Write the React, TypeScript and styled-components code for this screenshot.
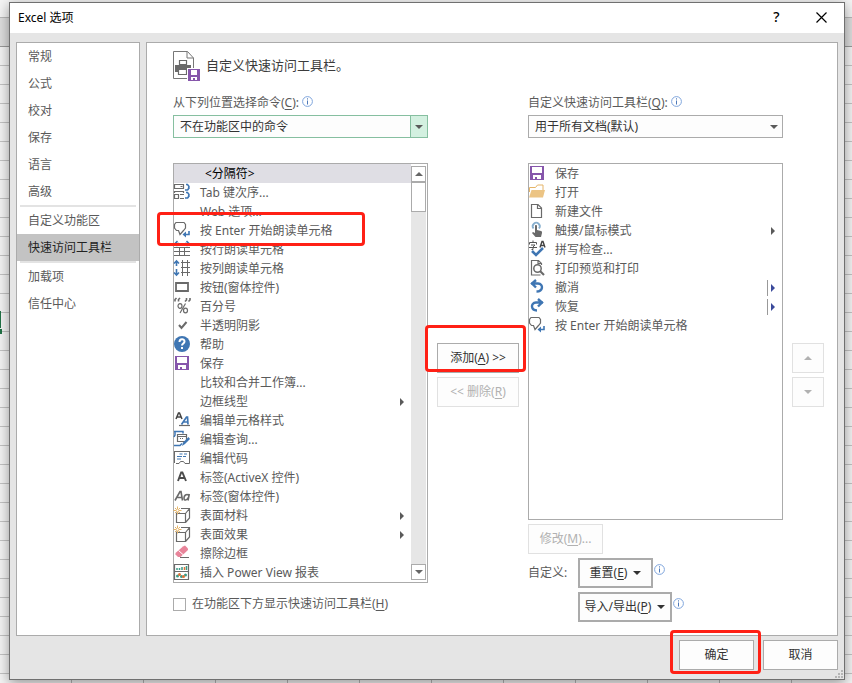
import React, { useState } from "react";
import styled, { createGlobalStyle, css } from "styled-components";

const GlobalStyle = createGlobalStyle`
  *, *::before, *::after { box-sizing: border-box; }
  body { margin: 0; }
  body, button, select, input {
    font-family: "Noto Sans", "Noto Sans CJK SC", sans-serif;
    font-size: 12px;
    line-height: 18px;
  }
  u { text-underline-offset: 2px; }
`;

const Sheet = styled.div`
  position: relative;
  display: flex;
  min-height: 100vh;
  padding: 2px 7px 3px 9px;
  background-color: #f4f4f4;
  background-image:
    linear-gradient(#f4f4f4 17px, #b8b8b8 17px, #b8b8b8 18px, #dedede 18px, #dedede 46px, #9a9a9a 46px, #9a9a9a 47px, transparent 47px),
    repeating-linear-gradient(transparent 0, transparent 8px, #c3c3c3 8px, #c3c3c3 9px, transparent 9px, transparent 19px),
    repeating-linear-gradient(90deg, transparent 0, transparent 71px, #b5b5b5 71px, #b5b5b5 72px);
`;

const ActiveCell = styled.div`
  position: absolute;
  left: 0;
  top: 311px;
  width: 1px;
  height: 17px;
  background: #217346;
  &::after {
    content: "";
    position: absolute;
    left: 0;
    top: 18px;
    width: 2px;
    height: 5px;
    background: #217346;
  }
`;

const Dialog = styled.div`
  position: relative;
  flex: 1;
  min-width: 0;
  display: flex;
  flex-direction: column;
  border: 1px solid #707070;
  background: #e5e5e5;
  box-shadow: 0 3px 12px rgba(0, 0, 0, 0.4);
`;

const TitleBar = styled.header`
  display: flex;
  height: 30px;
  padding-left: 8px;
  background: #fff;
  color: #000;
`;

const WindowTitle = styled.h1`
  flex: 1;
  margin: 0;
  font-size: 12px;
  font-weight: 400;
  line-height: 29px;
`;

const WindowButton = styled.button`
  display: grid;
  place-items: center;
  width: 45px;
  height: 28px;
  padding: 0;
  border: 0;
  background: none;
  font-size: 14px;
  font-weight: 500;
  color: #000;
`;

const Body = styled.div`
  flex: 1;
  display: flex;
  gap: 6px;
  padding: 9px 6px 0;
`;

const Sidebar = styled.nav`
  width: 124px;
  border: 1px solid #ababab;
  background: #fff;
`;

const NavItem = styled.a<{ $active?: boolean }>`
  display: block;
  padding-left: 11px;
  line-height: 27px;
  text-decoration: none;
  color: ${(p) => (p.$active ? "#222" : "#5a5a5a")};
  background: ${(p) => (p.$active ? "#c3c3c3" : "none")};
`;

const NavRule = styled.hr`
  height: 2px;
  margin: 0 3px;
  border: 0;
  background: #e3e3e3;
`;

const Main = styled.main`
  flex: 1;
  min-width: 0;
  padding: 8px 13px 8px 26px;
  border: 1px solid #ababab;
  background: #fff;
  color: #5a5a5a;
`;

const Heading = styled.h2`
  display: flex;
  align-items: center;
  gap: 5px;
  height: 31px;
  margin: 0 0 11px;
  font-size: 13px;
  font-weight: 400;
  color: #3c3c3c;
  span { padding-bottom: 3px; }
`;

const Columns = styled.div`
  display: grid;
  grid-template-columns: minmax(0, 1fr) 82px minmax(0, 1fr) 32px;
  gap: 9px;
`;

const Column = styled.section`
  display: flex;
  flex-direction: column;
`;

const ButtonColumn = styled.div`
  display: flex;
  flex-direction: column;
  gap: 4px;
  padding-top: 250px;
`;

const FieldLabel = styled.div`
  display: flex;
  align-items: center;
  gap: 3px;
  height: 20px;
  margin-bottom: 2px;
  svg { margin-bottom: 3px; }
`;

const SelectBox = styled.div<{ $hot?: boolean }>`
  position: relative;
  margin-bottom: 25px;
  select {
    display: block;
    width: 100%;
    height: 23px;
    padding: 0 24px 0 6px;
    appearance: none;
    border: 1px solid ${(p) => (p.$hot ? "#86bfa0" : "#ababab")};
    border-radius: 0;
    background: #fdfdfd;
    color: #333;
  }
`;

const SelectArrow = styled.span<{ $hot?: boolean }>`
  position: absolute;
  top: 0;
  right: 0;
  display: grid;
  place-items: center;
  width: 18px;
  height: 23px;
  pointer-events: none;
  ${(p) =>
    p.$hot &&
    css`
      border: 1px solid #86bfa0;
      background: #d3f0e0;
    `}
`;

const ListFrame = styled.div<{ $tall?: boolean }>`
  display: flex;
  min-height: ${(p) => (p.$tall ? "420px" : "357px")};
  border: 1px solid #ababab;
`;

const List = styled.ul`
  flex: 1;
  min-width: 0;
  margin: 0;
  padding: 0;
  list-style: none;
`;

const ListRow = styled.li<{ $selected?: boolean }>`
  position: relative;
  display: flex;
  align-items: center;
  gap: 10px;
  height: 19px;
  padding-right: 5px;
  white-space: nowrap;
  cursor: default;
  ${(p) =>
    p.$selected &&
    css`
      padding-left: 5px;
      background: #dfdee4;
      color: #000;
    `}
`;

const IconSlot = styled.span`
  display: block;
  width: 16px;
  height: 16px;
  margin-bottom: 1px;
  svg { display: block; overflow: visible; }
`;

const RowText = styled.span`
  flex: 1;
`;

const SplitMark = styled.span`
  display: flex;
  align-items: center;
  height: 16px;
  padding-left: 1px;
  border-left: 1px solid #999;
  color: #3b4a9b;
`;

const ScrollBar = styled.div`
  display: flex;
  flex-direction: column;
  width: 16px;
  padding: 2px 1px 2px 0;
`;

const ScrollButton = styled.button`
  display: grid;
  place-items: center;
  height: 16px;
  padding: 0;
  border: 1px solid #ababab;
  background: #fff;
  color: #666;
`;

const ScrollTrack = styled.div`
  flex: 1;
  background: #e6e6e6;
`;

const ScrollThumb = styled.div`
  height: 30px;
  border: 1px solid #ababab;
  background: #fff;
`;

const Callout = styled.span<{ $kind: "row" | "add" | "ok" }>`
  position: absolute;
  z-index: 2;
  border: 3px solid #ff2015;
  border-radius: 4px;
  pointer-events: none;
  ${(p) => p.$kind === "row" && css`left: -17px; top: -9px; width: 208px; height: 34px;`}
  ${(p) => p.$kind === "add" && css`inset: -19px -8px 0 -13px;`}
  ${(p) => p.$kind === "ok" && css`inset: -11px -8px -5px -10px;`}
`;

const PushButton = styled.button<{ $strong?: boolean; $wide?: boolean }>`
  position: relative;
  display: flex;
  align-items: center;
  justify-content: center;
  gap: 6px;
  min-width: ${(p) => (p.$wide ? "94px" : "75px")};
  height: 30px;
  padding: 0;
  border: ${(p) => (p.$strong ? "2px" : "1px")} solid #ababab;
  background: #fdfdfd;
  color: #333;
  white-space: nowrap;
  &:disabled {
    border-color: #e1e1e1;
    color: #b1b1b1;
  }
`;

const MoveButton = styled(PushButton)`
  min-width: 32px;
`;

const Actions = styled.div`
  display: grid;
  grid-template-columns: 50px auto 1fr;
  gap: 4px 0;
  margin-top: 4px;
  justify-items: start;
`;

const ModifyCell = styled.div`
  grid-column: 1 / -1;
`;

const ActionLabel = styled.span`
  line-height: 30px;
`;

const ActionGroup = styled.div`
  grid-column: 2 / -1;
  display: flex;
  gap: 1px;
  svg { margin-top: 6px; }
  button svg { margin-top: 0; }
`;

const CheckRow = styled.label`
  display: flex;
  align-items: center;
  gap: 6px;
  margin-top: 12px;
  input {
    width: 13px;
    height: 13px;
    margin: 0;
    appearance: none;
    border: 1px solid #ababab;
    background: #fff;
  }
  input:checked { background: #217346; }
`;

const Footer = styled.footer`
  display: flex;
  justify-content: flex-end;
  gap: 9px;
  padding: 4px 6px 9px;
`;

const Grip = styled.svg`
  position: absolute;
  right: 1px;
  bottom: 1px;
`;

type Direction = "up" | "down" | "right";

const trianglePaths: Record<Direction, string> = {
  up: "M0 6 4 2 8 6z",
  down: "M0 2h8L4 6z",
  right: "M2 0 6 4 2 8z",
};

const Triangle = ({ dir }: { dir: Direction }) => (
  <svg width="8" height="8" viewBox="0 0 8 8" fill="currentColor" aria-hidden="true">
    <path d={trianglePaths[dir]} />
  </svg>
);

const InfoIcon = () => (
  <svg width="11" height="11" viewBox="0 0 11 11" fill="none" aria-hidden="true">
    <circle cx="5.5" cy="5.5" r="4.9" stroke="#7fa5dc" />
    <path d="M5.5 4.5v4M5.5 2.3v1.2" stroke="#4d78b8" />
  </svg>
);

const GRAY = "#6a6a6a";
const BLUE = "#3f76b3";
const PURPLE = "#8656ab";

const SaveShape = () => (
  <path fill={PURPLE} fillRule="evenodd" d="M1 1h14v14H1zM3 2v6h10V2zM4 10v4h2v-2h2v2h4v-4z" />
);

const ReadShape = () => (
  <>
    <path d="M2 .5h8l1.500 2v3.500L9.500 8.500 6 12.500 4.500 8.500H2.500L.5 6V2.500z" stroke={GRAY} strokeWidth="1.200" fill="none" />
    <path d="M15 9v3.500h-5" stroke={BLUE} strokeWidth="1.600" fill="none" />
    <path d="M12 9.500v6L8.500 12.500z" fill={BLUE} />
  </>
);

const CubeShape = () => (
  <>
    <path d="M2.500 6.500h9v9h-9zM7 1.500h8.500V11L11.500 15.500M11.500 6.500l4-5M2.500 6.500 4 5" stroke={GRAY} strokeWidth="1.200" fill="none" />
    <path d="M3.500-.5v8M-.5 3.500h8M1 1l5 5M6 1l-5 5" stroke="#e5b468" />
    <circle cx="3.500" cy="3.500" r="1.400" fill="#fff" stroke="#e5b468" strokeWidth=".8" />
  </>
);

const glyphs: Record<string, React.ReactNode> = {
  tab: (
    <>
      <path d="M.5.500h9v4h-9zM6.500 2.500h2M0 7.500h10M.5 7v2M9.500 7v2M.5 10.500h4v4h-4zM6 10.500h4M6 14.500h4M2 10.500h3" stroke={GRAY} strokeWidth="1.200" fill="none" />
      <path d="M12 .5h1.500l1.500 2-1 3.500M15.500 3.500 13.500 6H11M12 8.500h1.500l1.500 2-1 3.500M15.500 11.500l-2 2.500H11" stroke={BLUE} strokeWidth="1.500" fill="none" />
    </>
  ),
  read: <ReadShape />,
  rows: (
    <>
      <path d="M0 6.500h16M0 10.500h16M0 14.500h16M5.500 6v9M10.500 6v9" stroke={GRAY} fill="none" />
      <path d="M1 2.500h4M11 2.500h4M3.500 0 1 2.500 3.500 5M12.500 0 15 2.500 12.500 5" stroke={BLUE} strokeWidth="1.500" fill="none" />
    </>
  ),
  cols: (
    <>
      <path d="M8.500 0v16M13.500 0v16M7 2.500h9M7 7.500h9M7 12.500h9" stroke={GRAY} fill="none" />
      <path d="M2.500 1v5M0 3.500 2.500 1 5 3.500M2.500 9v6M0 12.500 2.500 15 5 12.500" stroke={BLUE} strokeWidth="1.600" fill="none" />
    </>
  ),
  button: <path d="M2 4h12v8H2z" stroke={GRAY} strokeWidth="1.800" fill="none" />,
  percent: (
    <>
      <path d="M1 3.500v-2L2.500 0M4.500 3.500v-2L6 0M11 3.500l1.500-1.500V0M14.500 3.500 16 2V0" stroke={GRAY} strokeWidth="1.600" fill="none" />
      <path d="M11.500 5.500 6 15" stroke={GRAY} strokeWidth="1.200" />
      <ellipse cx="6" cy="8" rx="2" ry="2.300" stroke={GRAY} strokeWidth="1.200" fill="none" />
      <ellipse cx="11.500" cy="12.500" rx="2" ry="2.300" stroke={GRAY} strokeWidth="1.200" fill="none" />
    </>
  ),
  check: <path d="M5 8l2.500 3L12.500 5" stroke={GRAY} strokeWidth="2" fill="none" />,
  help: (
    <>
      <circle cx="8" cy="8" r="8" fill={BLUE} />
      <path d="M5.500 6c0-3.500 5-3.500 5-.5 0 2-2.500 2-2.500 4M8 11v2" stroke="#fff" strokeWidth="2" fill="none" />
    </>
  ),
  save: <SaveShape />,
  style: (
    <>
      <path d="M2 7 4.500 1h1L8 7M3 5h4" stroke="#444" strokeWidth="1.500" fill="none" />
      <path d="M7.500 12.500 12.500 5h1l.5 7.500M9.500 10h4.500" stroke={BLUE} strokeWidth="1.700" fill="none" />
      <path d="M5 13.500h11" stroke={GRAY} strokeWidth="1.200" />
    </>
  ),
  query: (
    <>
      <path d="M0 .5h9v2M1 1v3l-1 2M0 14.500h6l2-2" stroke={BLUE} strokeWidth="1.500" fill="none" />
      <path d="M3.500 3.500h9v7h-9zM3.500 5.500h9M6 7.500h1M8 7.500h1" stroke={GRAY} strokeWidth="1.200" fill="none" />
      <path d="M8 15l1-3.500 5.500-5.500 1.500 2-5 5z" fill={BLUE} />
    </>
  ),
  code: (
    <>
      <path d="M.5 1v10.500M0 1.500h16M15.500 1v10.500M.5 9v4M2 13.500h3l1.500-2h3l1.500 2h4.500v-3" stroke={GRAY} fill="none" />
      <path d="M5.500 4h3M10 4h3M3 6.500h5M9 6.500h3M3 9h4" stroke={BLUE} />
    </>
  ),
  label: <path d="M4 12 7.200 3.500h1.200L12 12M5.300 9h5.200" stroke="#4b4b4b" strokeWidth="1.900" fill="none" />,
  labelForm: (
    <>
      <path d="M1 12.500 6 3.500h1L8.500 12.500M3.500 9.500h5" stroke={GRAY} strokeWidth="1.600" fill="none" />
      <path d="M15.300 6 14 12.500M14.500 7c-2-1.500-4.500.5-4.500 3 0 3.500 3 2 4.300-.5" stroke={GRAY} strokeWidth="1.600" fill="none" />
    </>
  ),
  cube: <CubeShape />,
  eraser: (
    <>
      <path d="M9 1.500 11 .500 14 3.500v1.500L6.500 12H4L1.500 9.500V8z" fill="#e8849a" />
      <path d="M4.500 5.500 9.500 10" stroke="#fff" />
      <path d="M6 12.500h9" stroke={GRAY} />
    </>
  ),
  powerView: (
    <>
      <path d="M.5.500h14v15H.5zM.5 7.500h14" stroke={GRAY} strokeWidth="1.200" fill="none" />
      <path d="M3 6V4M5.500 6V4M8 6V3M12.500 6V2" stroke="#3b9b86" strokeWidth="1.500" />
      <path d="M10.500 6V3" stroke="#dc7136" strokeWidth="1.500" />
      <circle cx="3.500" cy="12" r="1.500" fill="#3b9b86" />
      <circle cx="7.500" cy="12.500" r="1.500" fill="#3b9b86" />
      <circle cx="11.500" cy="11" r="1.500" fill="#3b9b86" />
      <circle cx="5.500" cy="10.500" r="1.500" fill="#dc7136" />
      <circle cx="9.500" cy="12.500" r="1.500" fill="#dc7136" />
    </>
  ),
  open: (
    <>
      <path d="M.5 8V3.500h6l2-2.500h5.500v6" stroke="#e5b468" fill="#fff" />
      <path d="M2.500 6H16l-2 7.500H0z" fill="#ecc484" />
    </>
  ),
  file: <path d="M2.500 1.500h6.500l3.500 3.500v9.500h-10zM8.500 1.500v4h4" stroke={GRAY} strokeWidth="1.200" fill="none" />,
  touch: (
    <>
      <path d="M4.500 6.500a3.500 3.500 0 1 1 5.500 0" stroke="#88afce" strokeWidth="1.800" fill="none" />
      <path d="M6 4c0-1.200 2-1.200 2 0v4l4 1c1 .3 1 1 1 2l-1 4H6.500L3 11l1-1 2 1z" fill={GRAY} />
    </>
  ),
  spell: (
    <>
      <path d="M4-.5v2M.5 3.500v-2h7v2M2 4h4L4 6v2.500H2.500M0 6.500h8" stroke="#555" fill="none" />
      <path d="M11 6.500 13 .5h1L16 6.500M12 4.500h3.500" stroke="#444" strokeWidth="1.400" fill="none" />
      <path d="M3 10l4 4L14 7" stroke={BLUE} strokeWidth="2.500" fill="none" />
    </>
  ),
  preview: (
    <>
      <path d="M12.500 5v-1.500L9.500.500h-7v14.500h9M9 .500v3h3" stroke={GRAY} strokeWidth="1.200" fill="none" />
      <circle cx="8.500" cy="8.500" r="3.700" fill="#fff" stroke={GRAY} strokeWidth="1.500" />
      <path d="M11 11l4 4" stroke={GRAY} strokeWidth="2.200" />
    </>
  ),
  undo: (
    <path d="M7 1 3 4.500 7 8.500M2 4.500h7c6 .5 5 8-1.500 8" stroke={BLUE} strokeWidth="2.400" fill="none" />
  ),
  redo: (
    <path d="M9 1l4 3.500L9 8.500M14 4.500H7c-6 .5-5 8 1 8" stroke={BLUE} strokeWidth="2.400" fill="none" />
  ),
};

const RowIcon = ({ name }: { name?: string }) => (
  <IconSlot>
    {name && (
      <svg width="16" height="16" viewBox="0 0 16 16" aria-hidden="true">
        {glyphs[name]}
      </svg>
    )}
  </IconSlot>
);

const HeadingIcon = () => (
  <svg width="28" height="31" viewBox="0 0 28 31" fill="none" aria-hidden="true">
    <path d="M14 27.500H.500v-27h14l6 6.500V17M14 .500V7h6.500" stroke="#777" />
    <path d="M2 14h16v7H2z" fill={GRAY} />
    <path d="M6.500 9.500h7v4h-7zM5.500 18.500h8v5h-8z" fill="#fff" stroke={GRAY} strokeWidth="1.200" />
    <path d="M14 17h14v14H14z" fill="#fff" />
    <path d="M15 18h12v12H15z" fill={PURPLE} />
    <path d="M18 19h6v5h-6zM18 26h6v3h-2v-2h-2v2h-2z" fill="#fff" />
  </svg>
);

interface Command {
  text: string;
  icon?: string;
  more?: "menu" | "split";
  marked?: boolean;
}

const available: Command[] = [
  { text: "<分隔符>" },
  { text: "Tab 键次序...", icon: "tab" },
  { text: "Web 选项..." },
  { text: "按 Enter 开始朗读单元格", icon: "read", marked: true },
  { text: "按行朗读单元格", icon: "rows" },
  { text: "按列朗读单元格", icon: "cols" },
  { text: "按钮(窗体控件)", icon: "button" },
  { text: "百分号", icon: "percent" },
  { text: "半透明阴影", icon: "check" },
  { text: "帮助", icon: "help" },
  { text: "保存", icon: "save" },
  { text: "比较和合并工作簿..." },
  { text: "边框线型", more: "menu" },
  { text: "编辑单元格样式", icon: "style" },
  { text: "编辑查询...", icon: "query" },
  { text: "编辑代码", icon: "code" },
  { text: "标签(ActiveX 控件)", icon: "label" },
  { text: "标签(窗体控件)", icon: "labelForm" },
  { text: "表面材料", icon: "cube", more: "menu" },
  { text: "表面效果", icon: "cube", more: "menu" },
  { text: "擦除边框", icon: "eraser" },
  { text: "插入 Power View 报表", icon: "powerView" },
];

const current: Command[] = [
  { text: "保存", icon: "save" },
  { text: "打开", icon: "open" },
  { text: "新建文件", icon: "file" },
  { text: "触摸/鼠标模式", icon: "touch", more: "menu" },
  { text: "拼写检查...", icon: "spell" },
  { text: "打印预览和打印", icon: "preview" },
  { text: "撤消", icon: "undo", more: "split" },
  { text: "恢复", icon: "redo", more: "split" },
  { text: "按 Enter 开始朗读单元格", icon: "read" },
];

const navGroups = [
  ["常规", "公式", "校对", "保存", "语言", "高级"],
  ["自定义功能区", "快速访问工具栏"],
  ["加载项", "信任中心"],
];

const CommandList = ({ items, label, selected }: { items: Command[]; label: string; selected?: number }) => (
  <List role="listbox" aria-label={label}>
    {items.map((item, i) => (
      <ListRow key={item.text} role="option" aria-selected={i === selected} $selected={i === selected}>
        <RowIcon name={item.icon} />
        <RowText>{item.text}</RowText>
        {item.more === "menu" && <Triangle dir="right" />}
        {item.more === "split" && (
          <SplitMark>
            <Triangle dir="right" />
          </SplitMark>
        )}
        {item.marked && <Callout $kind="row" />}
      </ListRow>
    ))}
  </List>
);

export default function App() {
  const [below, setBelow] = useState(false);
  return (
    <Sheet>
      <GlobalStyle />
      <ActiveCell />
      <Dialog role="dialog" aria-labelledby="window-title">
        <TitleBar>
          <WindowTitle id="window-title">Excel 选项</WindowTitle>
          <WindowButton type="button">?</WindowButton>
          <WindowButton type="button" aria-label="关闭">
            <svg width="11" height="11" viewBox="0 0 11 11" stroke="#000" strokeWidth="1.200" aria-hidden="true">
              <path d="M.5.500l10 10M10.500.500l-10 10" />
            </svg>
          </WindowButton>
        </TitleBar>
        <Body>
          <Sidebar>
            {navGroups.map((group, i) => (
              <React.Fragment key={group[0]}>
                {i > 0 && <NavRule />}
                {group.map((name) => (
                  <NavItem key={name} href="#" $active={name === "快速访问工具栏"}>
                    {name}
                  </NavItem>
                ))}
              </React.Fragment>
            ))}
          </Sidebar>
          <Main>
            <Heading>
              <HeadingIcon />
              <span>自定义快速访问工具栏。</span>
            </Heading>
            <Columns>
              <Column>
                <FieldLabel>
                  <label htmlFor="source">
                    从下列位置选择命令(<u>C</u>):
                  </label>
                  <InfoIcon />
                </FieldLabel>
                <SelectBox $hot>
                  <select id="source">
                    <option>不在功能区中的命令</option>
                  </select>
                  <SelectArrow $hot>
                    <Triangle dir="down" />
                  </SelectArrow>
                </SelectBox>
                <ListFrame $tall>
                  <CommandList items={available} label="可用命令" selected={0} />
                  <ScrollBar>
                    <ScrollButton type="button" aria-label="向上滚动">
                      <Triangle dir="up" />
                    </ScrollButton>
                    <ScrollTrack>
                      <ScrollThumb />
                    </ScrollTrack>
                    <ScrollButton type="button" aria-label="向下滚动">
                      <Triangle dir="down" />
                    </ScrollButton>
                  </ScrollBar>
                </ListFrame>
                <CheckRow>
                  <input type="checkbox" checked={below} onChange={(e) => setBelow(e.target.checked)} />
                  <span>
                    在功能区下方显示快速访问工具栏(<u>H</u>)
                  </span>
                </CheckRow>
              </Column>
              <ButtonColumn>
                <PushButton type="button">
                  <span>
                    添加(<u>A</u>) &gt;&gt;
                  </span>
                  <Callout $kind="add" />
                </PushButton>
                <PushButton type="button" disabled>
                  <span>
                    &lt;&lt; 删除(<u>R</u>)
                  </span>
                </PushButton>
              </ButtonColumn>
              <Column>
                <FieldLabel>
                  <label htmlFor="target">
                    自定义快速访问工具栏(<u>Q</u>):
                  </label>
                  <InfoIcon />
                </FieldLabel>
                <SelectBox>
                  <select id="target">
                    <option>用于所有文档(默认)</option>
                  </select>
                  <SelectArrow>
                    <Triangle dir="down" />
                  </SelectArrow>
                </SelectBox>
                <ListFrame>
                  <CommandList items={current} label="当前命令" />
                </ListFrame>
                <Actions>
                  <ModifyCell>
                    <PushButton type="button" disabled>
                      <span>
                        修改(<u>M</u>)...
                      </span>
                    </PushButton>
                  </ModifyCell>
                  <ActionLabel>自定义:</ActionLabel>
                  <ActionGroup>
                    <PushButton type="button" $strong>
                      <span>
                        重置(<u>E</u>)
                      </span>
                      <Triangle dir="down" />
                    </PushButton>
                    <InfoIcon />
                  </ActionGroup>
                  <ActionGroup>
                    <PushButton type="button" $strong $wide>
                      <span>
                        导入/导出(<u>P</u>)
                      </span>
                      <Triangle dir="down" />
                    </PushButton>
                    <InfoIcon />
                  </ActionGroup>
                </Actions>
              </Column>
              <ButtonColumn>
                <MoveButton type="button" disabled aria-label="上移">
                  <Triangle dir="up" />
                </MoveButton>
                <MoveButton type="button" disabled aria-label="下移">
                  <Triangle dir="down" />
                </MoveButton>
              </ButtonColumn>
            </Columns>
          </Main>
        </Body>
        <Footer>
          <PushButton type="button">
            确定
            <Callout $kind="ok" />
          </PushButton>
          <PushButton type="button">取消</PushButton>
        </Footer>
        <Grip width="8" height="8" viewBox="0 0 8 8" fill="#b5b5b5" aria-hidden="true">
          <path d="M6 0h2v2H6zM6 3h2v2H6zM3 3h2v2H3zM6 6h2v2H6zM3 6h2v2H3zM0 6h2v2H0z" />
        </Grip>
      </Dialog>
    </Sheet>
  );
}
